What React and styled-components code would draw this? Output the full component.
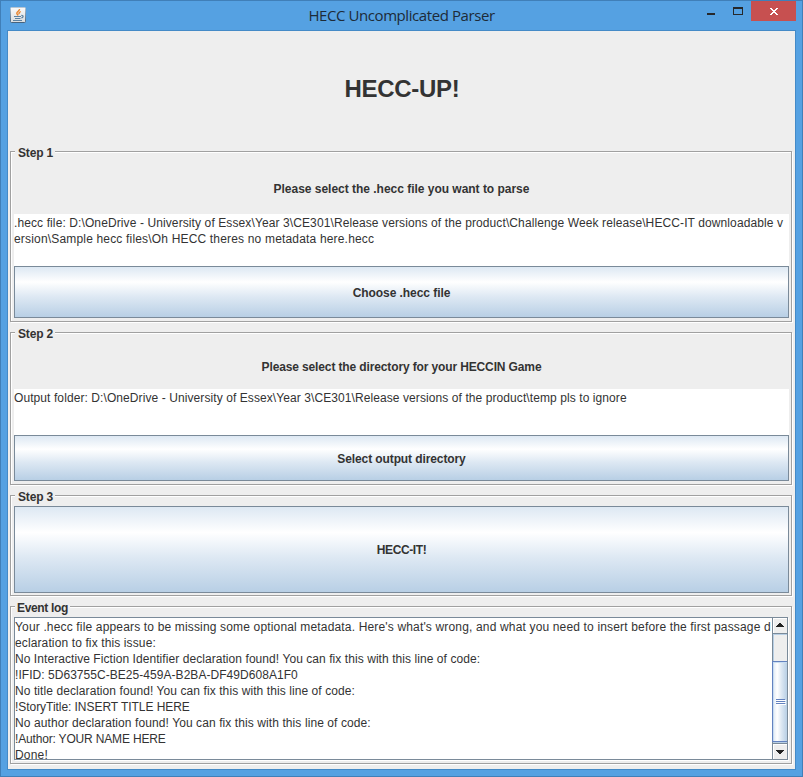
import React from "react";
import styled, { createGlobalStyle } from "styled-components";

const GlobalStyle = createGlobalStyle`
  *, *::before, *::after { box-sizing: border-box; }
  body { margin: 0; overflow: hidden; }
`;

const Window = styled.div`
  width: 803px;
  height: 777px;
  display: flex;
  flex-direction: column;
  padding: 0 6px 6px;
  border: 1px solid #407fb8;
  background: #55a1e2;
  color: #333;
  font: 12px/16px "Liberation Sans", Arial, sans-serif;
`;

const TitleBar = styled.header`
  height: 29px;
  flex: none;
  display: grid;
  grid-template-columns: 108px 1fr 108px;
  align-items: start;
`;

const AppIcon = styled.svg`
  margin: 6px 0 0 3px;
  width: 16px;
  height: 16px;
`;

const WindowTitle = styled.div`
  text-align: center;
  color: #1d2b38;
  font: 15px/20px "Open Sans", sans-serif;
  letter-spacing: -0.42px;
  padding-top: 4px;
`;

const WindowControls = styled.div`
  display: flex;
  justify-content: flex-end;
  color: #26282b;
`;

const ControlButton = styled.button`
  width: ${(p) => p.$width}px;
  height: 20px;
  flex: none;
  border: 0;
  padding: 0;
  display: block;
  color: inherit;
  background: ${(p) => (p.$danger ? "#c75050" : "transparent")};
  svg { display: block; }
`;

const Content = styled.main`
  flex: 1;
  display: flex;
  flex-direction: column;
  gap: 10px;
  padding: 0 3px 0 2px;
  border: 1px solid #448ac7;
  background: #eee;
`;

const Heading = styled.h1`
  height: 120px;
  flex: none;
  margin: 0 0 -10px;
  display: flex;
  align-items: center;
  justify-content: center;
  padding: 0 0 5px 2px;
  font-size: 24px;
  letter-spacing: -0.3px;
`;

const Group = styled.section`
  position: relative;
  flex: none;
  display: grid;
  grid-auto-rows: ${(p) => p.$row}px;
  padding: 10px 2px ${(p) => p.$bottom}px 3px;
  border: 1px solid #a0a0a0;
  box-shadow: 1px 1px 0 #fff, inset 1px 1px 0 #fff;
`;

const Legend = styled.h2`
  position: absolute;
  top: -7px;
  left: 4px;
  margin: 0;
  padding: 0 2px 0 ${(p) => p.$indent}px;
  width: ${(p) => p.$width}px;
  background: #eee;
  font-size: 12px;
  line-height: 16px;
  white-space: nowrap;
  letter-spacing: ${(p) => p.$tracking || 0}px;
`;

const Prompt = styled.div`
  display: flex;
  align-items: center;
  justify-content: center;
  padding-top: 2px;
  font-weight: bold;
  letter-spacing: ${(p) => p.$tracking || 0}px;
`;

const TextArea = styled.div`
  overflow: hidden;
  background: #fff;
  padding-top: 1px;
`;

const Line = styled.div`
  white-space: pre;
  letter-spacing: ${(p) => p.$tracking}px;
`;

const MetalButton = styled.button`
  border: 1px solid #7a8a99;
  border-radius: 0;
  padding: ${(p) => p.$drop || 0}px 0 0;
  color: #333;
  background: linear-gradient(#dde8f3 0%, #fff 30%, #dde8f3 60%, #b8cfe5 100%);
  font: bold 12px/16px "Liberation Sans", Arial, sans-serif;
  letter-spacing: ${(p) => p.$tracking || 0}px;
`;

const ScrollPane = styled.div`
  display: flex;
  margin: 0 1px 1px 0;
  border: 1px solid #7a8a99;
  box-shadow: 1px 1px 0 #fff;
  overflow: visible;
  background: #fff;
`;

const LogText = styled.div`
  flex: 1;
  min-width: 0;
  height: 141px;
  overflow: hidden;
  padding-top: 1px;
`;

const ScrollBar = styled.div`
  width: 15px;
  display: flex;
  flex-direction: column;
`;

const ArrowButton = styled.button`
  height: 16px;
  width: 15px;
  flex: none;
  padding: 0;
  border: 0 solid #7a8a99;
  border-left-width: 1px;
  border-${(p) => (p.$down ? "top" : "bottom")}-width: 1px;
  background: #eee;
  box-shadow: inset 1px 1px 0 #fff;
  svg { display: block; transform: ${(p) => (p.$down ? "scaleY(-1)" : "none")}; }
`;

const Track = styled.div`
  flex: 1;
  padding-top: 27px;
  border-left: 1px solid #7a8a99;
  background: #eee;
  box-shadow: inset 1px 1px 0 #b8cfe5, inset 0 -1px 0 #b8cfe5;
`;

const Thumb = styled.div`
  height: 81px;
  margin-left: -1px;
  display: flex;
  flex-direction: column;
  align-items: flex-end;
  justify-content: center;
  gap: 1px;
  padding-right: 2px;
  border: 1px solid #6382bf;
  border-right: 0;
  background: linear-gradient(to right, #dde8f3 0%, #fff 30%, #dde8f3 60%, #b8cfe5 100%);
  box-shadow: inset 1px 1px 0 #c8ddf2;
`;

const Grip = styled.div`
  width: 9px;
  height: 1px;
  background: #6382bf;
  box-shadow: 1px 1px 0 #fff;
`;

const log = [
  ["Your .hecc file appears to be missing some optional metadata. Here's what's wrong, and what you need to insert before the first passage d", 0.16],
  ["eclaration to fix this issue:", 0.12],
  ["No Interactive Fiction Identifier declaration found! You can fix this with this line of code:", 0.066],
  ["!IFID: 5D63755C-BE25-459A-B2BA-DF49D608A1F0", 0.045],
  ["No title declaration found! You can fix this with this line of code:", 0.085],
  ["!StoryTitle: INSERT TITLE HERE", -0.05],
  ["No author declaration found! You can fix this with this line of code:", 0.09],
  ["!Author: YOUR NAME HERE", -0.17],
  ["Done!", 0.2],
];

function JavaIcon() {
  return (
    <AppIcon viewBox="0 0 16 16">
      <defs>
        <linearGradient id="tile" x1="0" y1="0" x2="0" y2="1">
          <stop offset="0" stopColor="#fafafa" />
          <stop offset="1" stopColor="#d9dcde" />
        </linearGradient>
        <linearGradient id="edge" x1="0" y1="0" x2="0" y2="1">
          <stop offset="0" stopColor="#b9c6d2" />
          <stop offset="1" stopColor="#46637e" />
        </linearGradient>
      </defs>
      <rect x=".5" y=".5" width="15" height="15" rx="1" fill="url(#tile)" stroke="url(#edge)" />
      <path d="M9.500 2.200C9.800 4 6.800 4.400 6.800 6.200 6.800 7.200 7.800 7.600 8 8.500M10.800 4.600C8.800 5.200 8.800 6.200 9.200 7.200" fill="none" stroke="#e8832b" strokeWidth="1.400" />
      <path d="M4 9.500h7M5 11.500h5.500M3 13.500h9M11.300 8.500c2.600-.4 2.200 2.200 0 2.400" fill="none" stroke="#5d82a1" strokeWidth="1.200" />
    </AppIcon>
  );
}

function Arrow() {
  return (
    <svg width="14" height="15" viewBox="0 0 14 15" shapeRendering="crispEdges">
      <path d="M6 5h2v1h1v1h1v1h1v1H3V8h1V7h1V6h1z" fill="#222" />
    </svg>
  );
}

export default function App() {
  return (
    <Window>
      <GlobalStyle />
      <TitleBar>
        <JavaIcon />
        <WindowTitle>HECC Uncomplicated Parser</WindowTitle>
        <WindowControls>
          <ControlButton $width={27} aria-label="Minimize">
            <svg width="27" height="20" shapeRendering="crispEdges"><path d="M9 12h8v2H9z" fill="currentColor" /></svg>
          </ControlButton>
          <ControlButton $width={26} aria-label="Maximize">
            <svg width="26" height="20" shapeRendering="crispEdges"><path d="M8 6h10v8H8zM9 8v5h8V8z" fillRule="evenodd" fill="currentColor" /></svg>
          </ControlButton>
          <ControlButton $width={45} $danger aria-label="Close">
            <svg width="45" height="20" shapeRendering="crispEdges">
              <path d="M19 7h2v1h1v1h2V8h1V7h2v1h-1v1h-1v1h-1v1h1v1h1v1h1v1h-2v-1h-1v-1h-2v1h-1v1h-2v-1h1v-1h1v-1h1v-1h-1V9h-1V8h-1z" fill="#fff" />
            </svg>
          </ControlButton>
        </WindowControls>
      </TitleBar>
      <Content>
        <Heading>HECC-UP!</Heading>
        <Group $row={52} $bottom={3}>
          <Legend $width={40} $indent={3} $tracking={-0.15}>Step 1</Legend>
          <Prompt $tracking={-0.02}>Please select the .hecc file you want to parse</Prompt>
          <TextArea>
            <Line $tracking={0.105}>{".hecc file: D:\\OneDrive - University of Essex\\Year 3\\CE301\\Release versions of the product\\Challenge Week release\\HECC-IT downloadable v"}</Line>
            <Line $tracking={0.175}>{"ersion\\Sample hecc files\\Oh HECC theres no metadata here.hecc"}</Line>
          </TextArea>
          <MetalButton $drop={2} $tracking={-0.06}>Choose .hecc file</MetalButton>
        </Group>
        <Group $row={46} $bottom={3}>
          <Legend $width={40} $indent={3} $tracking={-0.15}>Step 2</Legend>
          <Prompt $tracking={-0.13}>Please select the directory for your HECCIN Game</Prompt>
          <TextArea>
            <Line $tracking={0.085}>{"Output folder: D:\\OneDrive - University of Essex\\Year 3\\CE301\\Release versions of the product\\temp pls to ignore"}</Line>
          </TextArea>
          <MetalButton $drop={2} $tracking={-0.1}>Select output directory</MetalButton>
        </Group>
        <Group $row={87} $bottom={2}>
          <Legend $width={40} $indent={3} $tracking={-0.15}>Step 3</Legend>
          <MetalButton $tracking={-0.4}>HECC-IT!</MetalButton>
        </Group>
        <Group $row={144} $bottom={2}>
          <Legend $width={55} $indent={2} $tracking={-0.35}>Event log</Legend>
          <ScrollPane>
            <LogText>
              {log.map(([text, tracking]) => (
                <Line key={text} $tracking={tracking}>{text}</Line>
              ))}
            </LogText>
            <ScrollBar>
              <ArrowButton aria-label="Scroll up"><Arrow /></ArrowButton>
              <Track>
                <Thumb><Grip /><Grip /><Grip /></Thumb>
              </Track>
              <ArrowButton $down aria-label="Scroll down"><Arrow /></ArrowButton>
            </ScrollBar>
          </ScrollPane>
        </Group>
      </Content>
    </Window>
  );
}
